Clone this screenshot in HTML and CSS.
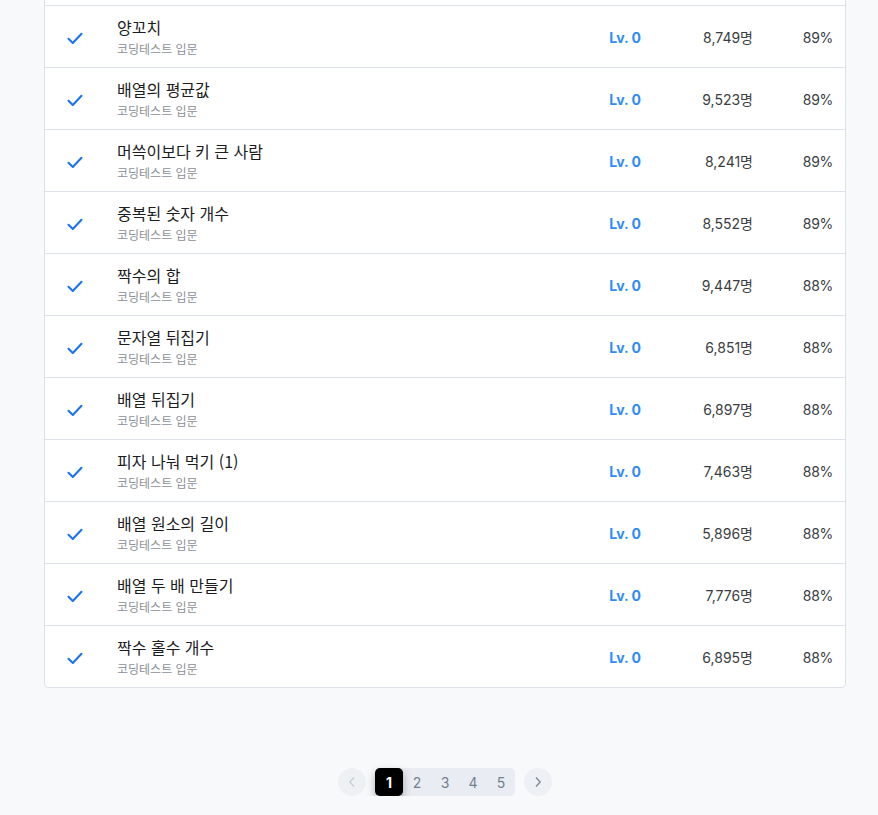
FILE: index.html
```html
<!DOCTYPE html>
<html lang="ko">
<head>
<meta charset="utf-8">
<link rel="stylesheet" href="styles.css">
</head>
<body>
<div class="page">
  <div class="card">
    <div class="row"><div class="check"></div><div class="title"><div class="name">&nbsp;</div><div class="sub">&nbsp;</div></div><div class="lv"></div><div class="cnt"></div><div class="pct"></div></div>
  </div>
</div>
<script src="app.js"></script>
</body>
</html>
```

FILE: app.js
```js
const rows = [
  ["양꼬치", "8,749명", "89%"],
  ["배열의 평균값", "9,523명", "89%"],
  ["머쓱이보다 키 큰 사람", "8,241명", "89%"],
  ["중복된 숫자 개수", "8,552명", "89%"],
  ["짝수의 합", "9,447명", "88%"],
  ["문자열 뒤집기", "6,851명", "88%"],
  ["배열 뒤집기", "6,897명", "88%"],
  ["피자 나눠 먹기 (1)", "7,463명", "88%"],
  ["배열 원소의 길이", "5,896명", "88%"],
  ["배열 두 배 만들기", "7,776명", "88%"],
  ["짝수 홀수 개수", "6,895명", "88%"]
];
const check = '<svg width="16" height="13" viewBox="0 0 16 13"><path d="M1.5 6.8 L5.8 11 L14.5 1.8" fill="none" stroke="#1b74e8" stroke-width="2.1" stroke-linecap="round" stroke-linejoin="round"/></svg>';
const card = document.querySelector('.card');
for (const [n, c, p] of rows) {
  const r = document.createElement('div');
  r.className = 'row';
  r.innerHTML = `<div class="check">${check}</div><div class="title"><div class="name">${n}</div><div class="sub">코딩테스트 입문</div></div><div class="lv">Lv. 0</div><div class="cnt">${c}</div><div class="pct">${p}</div>`;
  card.appendChild(r);
}
const pg = document.createElement('div');
pg.className = 'pager';
pg.innerHTML = `<button class="arrow disabled"><svg width="8" height="12" viewBox="0 0 8 12"><path d="M6 1.5 L1.8 6 L6 10.5" fill="none" stroke="currentColor" stroke-width="1.3"/></svg></button>
<div class="pages"><button class="pnum active">1</button><button class="pnum">2</button><button class="pnum">3</button><button class="pnum">4</button><button class="pnum">5</button></div>
<button class="arrow"><svg width="8" height="12" viewBox="0 0 8 12"><path d="M2 1.5 L6.2 6 L2 10.5" fill="none" stroke="currentColor" stroke-width="1.3"/></svg></button>`;
document.querySelector('.page').appendChild(pg);
```

FILE: styles.css
```css
html, body {
  margin: 0;
  padding: 0;
  background: #f8f9fb;
}
body {
  font-family: Inter, "Noto Sans CJK KR", sans-serif;
  color: #1e2022;
}
.page {
  width: 802px;
  margin-left: 44px;
  margin-top: -57px;
}
.card {
  background: #fff;
  border: 1px solid #dde2e8;
  border-radius: 4px;
}
.row {
  display: grid;
  grid-template-columns: 72px 1fr 100px 112px 80px;
  padding-right: 12px;
  height: 61px;
  align-items: center;
  border-bottom: 1px solid #dde2e8;
}
.row:last-child {
  border-bottom: none;
}
.check {
  padding-left: 22px;
  padding-top: 3px;
  display: flex;
}
.title {
  display: flex;
  flex-direction: column;
}
.name {
  font-family: "Noto Sans CJK KR", sans-serif;
  font-size: 16px;
  line-height: 24px;
  color: #1b1c1e;
}
.sub {
  font-family: "Noto Sans CJK KR", sans-serif;
  font-size: 12px;
  line-height: 20px;
  color: #8b9097;
}
.lv {
  text-align: right;
  font-size: 14px;
  font-weight: 700;
  color: #2f8bfb;
  padding-top: 1px;
}
.cnt, .pct {
  text-align: right;
  font-size: 14px;
  color: #3a3d42;
  padding-top: 1px;
}
.pct {
  letter-spacing: -0.3px;
}
.pager {
  display: flex;
  justify-content: center;
  align-items: center;
  gap: 9px;
  margin-top: 80px;
}
.pager button {
  border: none;
  margin: 0;
  padding: 0;
  font-family: Inter, sans-serif;
  cursor: pointer;
}
.arrow {
  width: 28px;
  height: 28px;
  border-radius: 50%;
  background: #edf0f4;
  color: #7a8593;
  display: flex;
  align-items: center;
  justify-content: center;
}
.arrow.disabled {
  color: #c5ccd5;
  background: #eef1f4;
}
.pages {
  display: flex;
  background: #e9edf3;
  border-radius: 5px;
}
.pnum {
  width: 28px;
  height: 28px;
  background: transparent;
  color: #74808e;
  font-size: 14px;
  border-radius: 5px;
}
.pnum.active {
  background: #000;
  color: #fff;
  font-weight: 700;
  box-shadow: 0 4px 8px rgba(0, 0, 0, 0.3);
}
```
